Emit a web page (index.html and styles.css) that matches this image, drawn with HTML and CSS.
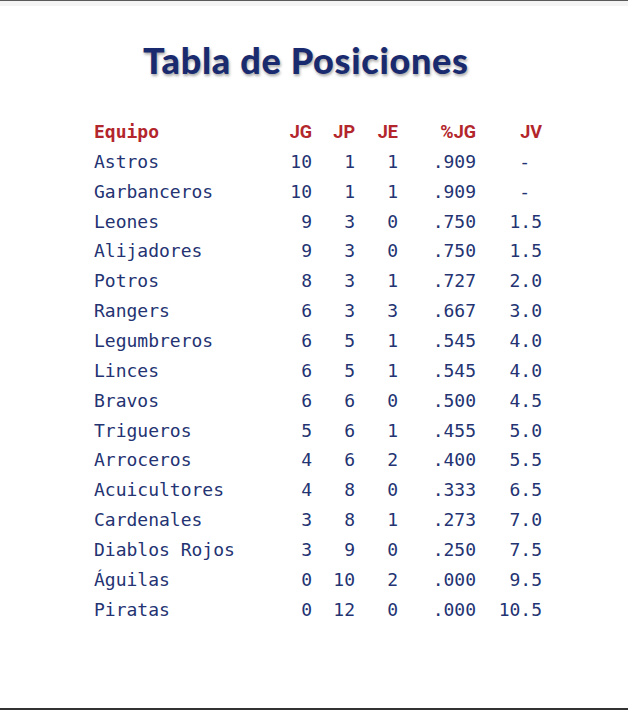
FILE: index.html
```html
<!DOCTYPE html>
<html lang="es">
<head>
<meta charset="utf-8">
<title>Tabla de Posiciones</title>
<link rel="stylesheet" href="styles.css">
</head>
<body>
<div class="frame">
  <h1 class="title">Tabla de Posiciones</h1>
  <div class="table">
    <div class="row head"><span class="team">Equipo</span><span>JG</span><span>JP</span><span>JE</span><span>%JG</span><span>JV</span></div>
    <div class="row"><span class="team">Astros</span><span>10</span><span>1</span><span>1</span><span>.909</span><span class="dash">-</span></div>
    <div class="row"><span class="team">Garbanceros</span><span>10</span><span>1</span><span>1</span><span>.909</span><span class="dash">-</span></div>
    <div class="row"><span class="team">Leones</span><span>9</span><span>3</span><span>0</span><span>.750</span><span>1.5</span></div>
    <div class="row"><span class="team">Alijadores</span><span>9</span><span>3</span><span>0</span><span>.750</span><span>1.5</span></div>
    <div class="row"><span class="team">Potros</span><span>8</span><span>3</span><span>1</span><span>.727</span><span>2.0</span></div>
    <div class="row"><span class="team">Rangers</span><span>6</span><span>3</span><span>3</span><span>.667</span><span>3.0</span></div>
    <div class="row"><span class="team">Legumbreros</span><span>6</span><span>5</span><span>1</span><span>.545</span><span>4.0</span></div>
    <div class="row"><span class="team">Linces</span><span>6</span><span>5</span><span>1</span><span>.545</span><span>4.0</span></div>
    <div class="row"><span class="team">Bravos</span><span>6</span><span>6</span><span>0</span><span>.500</span><span>4.5</span></div>
    <div class="row"><span class="team">Trigueros</span><span>5</span><span>6</span><span>1</span><span>.455</span><span>5.0</span></div>
    <div class="row"><span class="team">Arroceros</span><span>4</span><span>6</span><span>2</span><span>.400</span><span>5.5</span></div>
    <div class="row"><span class="team">Acuicultores</span><span>4</span><span>8</span><span>0</span><span>.333</span><span>6.5</span></div>
    <div class="row"><span class="team">Cardenales</span><span>3</span><span>8</span><span>1</span><span>.273</span><span>7.0</span></div>
    <div class="row"><span class="team">Diablos Rojos</span><span>3</span><span>9</span><span>0</span><span>.250</span><span>7.5</span></div>
    <div class="row"><span class="team">Águilas</span><span>0</span><span>10</span><span>2</span><span>.000</span><span>9.5</span></div>
    <div class="row"><span class="team">Piratas</span><span>0</span><span>12</span><span>0</span><span>.000</span><span>10.5</span></div>
  </div>
</div>
</body>
</html>
```
FILE: styles.css
```css
html, body {
  margin: 0;
  padding: 0;
  background: #ffffff;
}
.frame {
  width: 628px;
  height: 710px;
  box-sizing: border-box;
  border-top: 1px solid #5a5a5a;
  border-bottom: 2px solid #333333;
  background: linear-gradient(#f4f4f4, #f4f4f4) top / 100% 5px no-repeat, #ffffff;
  padding-top: 36px;
}
.title {
  margin: 0;
  padding-left: 143px;
  font-family: Lato, "Open Sans", sans-serif;
  font-weight: 900;
  font-size: 36px;
  line-height: 46px;
  color: #1a2a6e;
  text-shadow: 1px 2px 3px rgba(0, 0, 0, 0.35);
  letter-spacing: 0.7px;
}
.table {
  margin-top: 34px;
  padding-left: 94px;
  font-family: "DejaVu Sans Mono", "Liberation Mono", monospace;
  font-size: 18px;
  color: #243372;
}
.row {
  display: grid;
  grid-template-columns: 176px 42px 43px 43px 78px 66px;
  height: 29.87px;
  line-height: 29.87px;
}
.row span {
  text-align: right;
  white-space: nowrap;
}
.row .team {
  text-align: left;
}
.row .dash {
  padding-right: 12px;
}
.head {
  color: #b3262c;
  font-weight: bold;
  font-family: Roboto, "DejaVu Sans", sans-serif;
}
.head .team {
  font-family: "DejaVu Sans Mono", monospace;
}
```
